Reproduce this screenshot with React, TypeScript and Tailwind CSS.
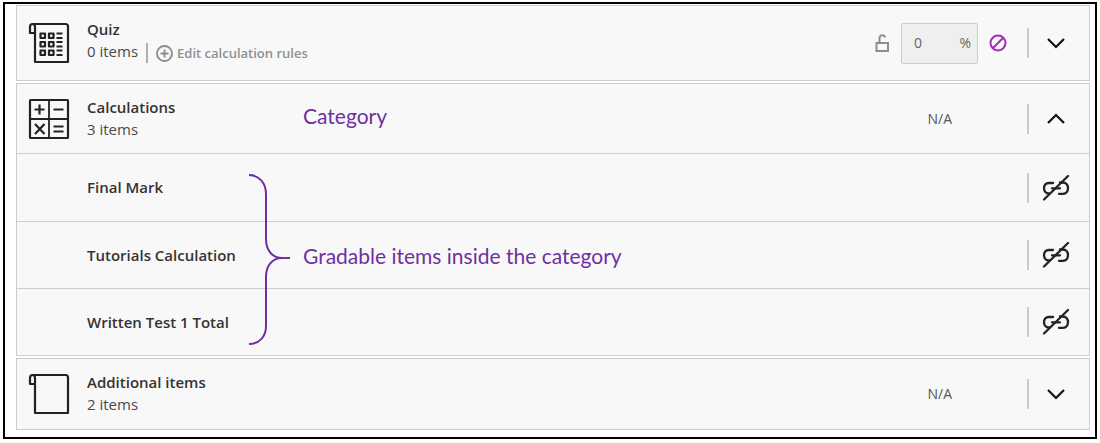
import type { ReactNode } from 'react';

const ink = '#222';

function Divider() {
  return <span aria-hidden="true" className="h-[30px] w-0.5 shrink-0 bg-[#cbcbcb]" />;
}

function Scroll({ children }: { children?: ReactNode }) {
  return (
    <svg width="42" height="42" viewBox="0 0 42 42" fill="none" stroke={ink} strokeWidth="2.200" strokeLinejoin="round" aria-hidden="true">
      <path d="M4 2H37.500Q40 2 40 4.500V40H7V11" />
      <path d="M7 11H2V5Q2 2 4.500 2T7 5Z" />
      {children}
    </svg>
  );
}

function QuizIcon() {
  return (
    <Scroll>
      {[14, 22.5, 31].map((y) => (
        <g key={y}>
          <rect x="12.500" y={y - 2.5} width="4.500" height="4.500" />
          <rect x="21" y={y - 2.5} width="4.500" height="4.500" />
          <path d={`M28.500 ${y - 2.5}h6M28.500 ${y + 2}h6`} strokeWidth="1.800" />
        </g>
      ))}
    </Scroll>
  );
}

function CalculatorIcon() {
  return (
    <svg width="42" height="42" viewBox="0 0 42 42" fill="none" stroke={ink} strokeWidth="2.200" aria-hidden="true">
      <rect x="2" y="2" width="38" height="38" rx="0.500" />
      <path d="M21 2V40M2 21H40" strokeWidth="1.800" />
      <path d="M6.500 11.500h10M11.500 6.500v10M25.500 11.500h10M7 26l9.500 10M16.500 26L7 36M25.500 28.500h10M25.500 33.500h10" />
    </svg>
  );
}

function Chevron({ up = false }: { up?: boolean }) {
  return (
    <svg width="18" height="12" viewBox="0 0 18 12" fill="none" stroke="#111" strokeWidth="2.200" aria-hidden="true">
      <path d={up ? 'M1 10L9 2L17 10' : 'M1 2L9 10L17 2'} />
    </svg>
  );
}

function UnlinkIcon() {
  return (
    <svg width="28" height="28" viewBox="0 0 28 28" fill="none" stroke={ink} strokeWidth="2.300" strokeLinecap="round" aria-hidden="true">
      <path d="M11 9H7C3.500 9 2 11.500 2 14C2 17 4 19.500 7 19.500" />
      <path d="M18 8.500H20.500C24.500 8.500 26 11.500 26 14C26 17.500 24 19.800 21 19.800H17" />
      <path d="M10 14.300H18" />
      <path d="M2 25.500L26 2" />
    </svg>
  );
}

type HeadProps = {
  icon: ReactNode;
  title: string;
  count: string;
  extra?: ReactNode;
  value: ReactNode;
  open?: boolean;
  className: string;
};

function CategoryHead({ icon, title, count, extra, value, open = false, className }: HeadProps) {
  return (
    <header className={`flex items-center pl-[11px] ${className}`}>
      <span className="w-[42px] shrink-0">{icon}</span>
      <div className={`ml-[17px] grow ${extra ? 'pb-1.5' : 'pb-0.5'}`}>
        <h2 className="text-[15px] leading-[22px] font-semibold">{title}</h2>
        <div className="flex h-[22px] items-center text-[15px] leading-[22px] text-[#4a4a4a]">
          {count}
          {extra}
        </div>
      </div>
      {value}
      <Divider />
      <button type="button" aria-label={title} aria-expanded={open} className="flex w-[60px] shrink-0 justify-center pr-1.5">
        <Chevron up={open} />
      </button>
    </header>
  );
}

const NotAvailable = () => <span className="mr-[75px] text-sm text-[#555]">N/A</span>;

const items = ['Final Mark', 'Tutorials Calculation', 'Written Test 1 Total'];
const card = 'border border-[#cdcdcd] bg-[#f8f8f8]';
const note = "absolute left-[286px] whitespace-nowrap font-['Lato',sans-serif] text-[21px] leading-7 text-[#7030a0]";

export default function App() {
  return (
    <div className="bg-white px-[3px] pt-0.5 pb-1 font-['Open_Sans',sans-serif] text-[#333]">
      <main className="flex flex-col gap-0.5 border-2 border-black pt-px pr-[5px] pb-[7px] pl-[11px]">
        <section className={card}>
          <CategoryHead
            className="h-[74px]"
            icon={<QuizIcon />}
            title="Quiz"
            count="0 items"
            extra={
              <span className="flex items-center pt-1">
                <span aria-hidden="true" className="mx-2 h-5 w-0.5 bg-[#b0b0b0]" />
                <button type="button" className="flex items-center gap-1 text-[13px] leading-4 font-semibold text-[#909090]">
                  <svg width="17" height="17" viewBox="0 0 17 17" fill="none" stroke="#8e8e8e" strokeWidth="1.900" aria-hidden="true">
                    <circle cx="8.500" cy="8.500" r="7.500" />
                    <path d="M4.500 8.500h8M8.500 4.500v8" />
                  </svg>
                  Edit calculation rules
                </button>
              </span>
            }
            value={
              <div className="mr-5 flex items-center">
                <svg width="14" height="18" viewBox="0 0 14 18" fill="none" stroke="#8e8e8e" strokeWidth="2" role="img" aria-label="Unlocked">
                  <rect x="1.500" y="9" width="11.500" height="8" />
                  <path d="M4.500 9V4.500C4.500 2.500 5.500 1.200 7.200 1.200C8.800 1.200 9.800 2 10 3.500" />
                </svg>
                <label className="mr-[11px] ml-3 flex h-[41px] w-[77px] items-center justify-between rounded-xs border border-[#cdcdcd] bg-[#efefef] pr-1.5 pl-3 text-sm text-[#666]">
                  <input aria-label="Quiz weight" defaultValue="0" className="w-8 bg-transparent outline-none" />
                  <span>%</span>
                </label>
                <button type="button" aria-label="Exclude from calculation">
                  <svg className="block" width="18" height="18" viewBox="0 0 18 18" fill="none" stroke="#a52bb8" strokeWidth="2" aria-hidden="true">
                    <circle cx="9" cy="9" r="7.500" />
                    <path d="M3.800 14.200L14.200 3.800" />
                  </svg>
                </button>
              </div>
            }
          />
        </section>

        <section className={`relative ${card}`}>
          <CategoryHead className="h-[69px]" icon={<CalculatorIcon />} title="Calculations" count="3 items" value={<NotAvailable />} open />
          <p className={`${note} top-[18px]`}>Category</p>
          <ul className="relative">
            {items.map((name) => (
              <li key={name} className="flex h-[67px] items-center border-t border-[#cdcdcd] pl-[70px] first:h-[68px]">
                <span className="grow text-[15px] font-semibold">{name}</span>
                <Divider />
                <button type="button" aria-label={`Unlink ${name}`} className="flex w-[60px] shrink-0 justify-center pr-1.5">
                  <UnlinkIcon />
                </button>
              </li>
            ))}
            <li aria-hidden="true" className="pointer-events-none absolute top-5 left-[231px]">
              <svg width="44" height="174" viewBox="0 0 44 174" fill="none" stroke="#7030a0" strokeWidth="2">
                <path d="M1 2C11 2 18 10 18 21V66C18 77 24 85 34 85H42H34C24 85 18 93 18 104V153C18 164 11 171 1 171" />
              </svg>
            </li>
            <li className={`${note} top-[89px]`}>Gradable items inside the category</li>
          </ul>
        </section>

        <section className={card}>
          <CategoryHead className="h-[70px]" icon={<Scroll />} title="Additional items" count="2 items" value={<NotAvailable />} />
        </section>
      </main>
    </div>
  );
}
